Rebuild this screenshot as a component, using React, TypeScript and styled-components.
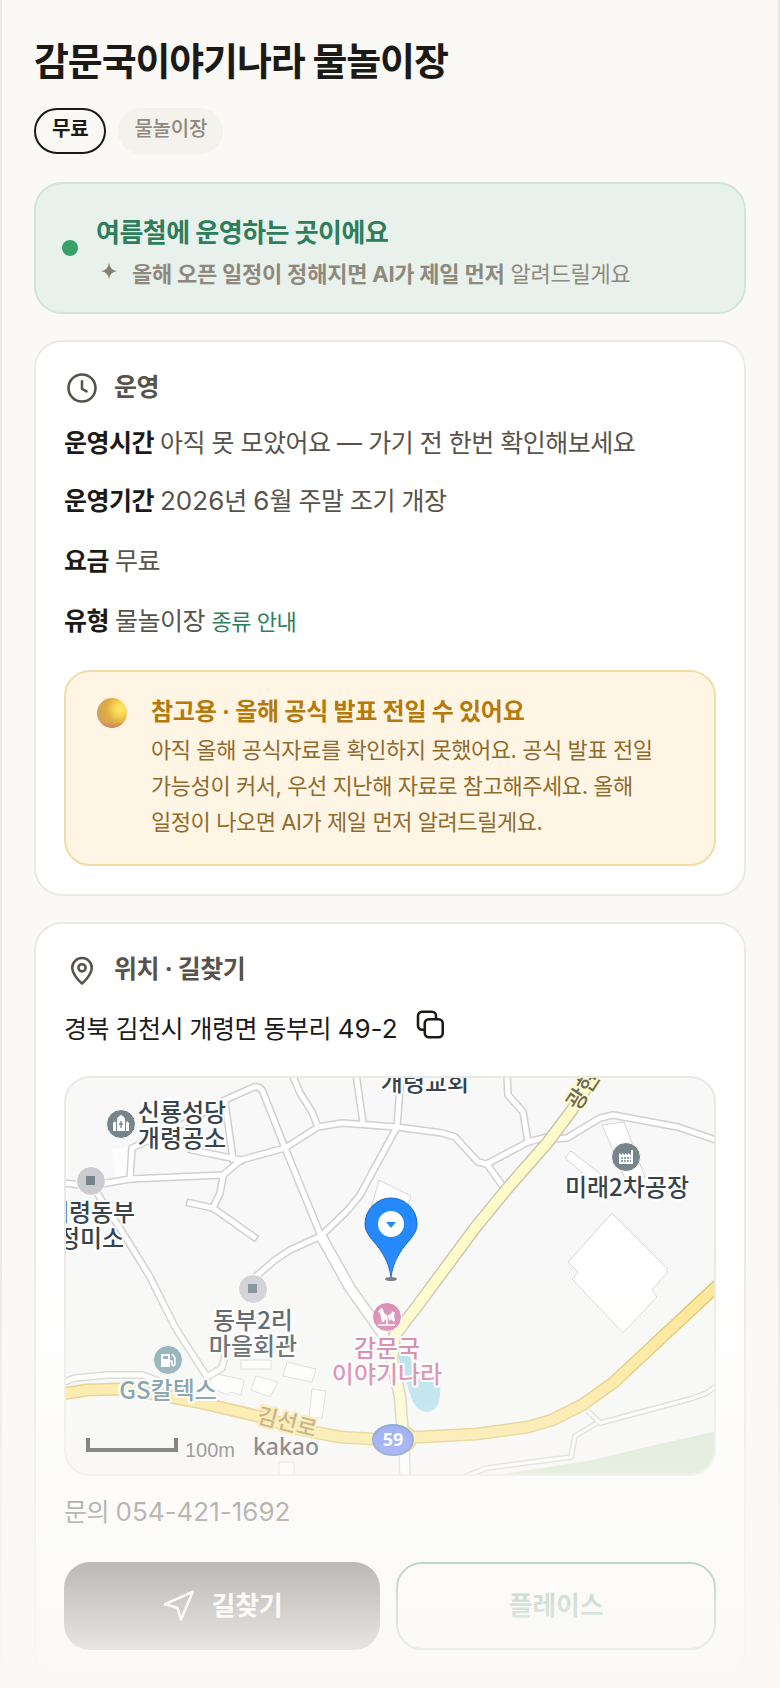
import React from "react";
import styled, { createGlobalStyle } from "styled-components";

const ink = "#1c1a17";
const body = "#57534a";
const line = "#ebe9e2";
const paper = "#faf9f6";
const green = "#2e7d5b";

const GlobalStyle = createGlobalStyle`
  *, *::before, *::after { box-sizing: border-box; }
  body {
    margin: 0;
    background: ${paper};
    color: ${ink};
    font-family: Inter, "Noto Sans CJK KR", sans-serif;
    font-size: 25px;
    letter-spacing: -0.02em;
    word-break: keep-all;
  }
  h1, h2, p, dl, dd { margin: 0; }
  button { font: inherit; letter-spacing: inherit; color: inherit; cursor: pointer; }
`;

const Page = styled.main`
  position: relative;
  padding: 38px 32px 8px;
  border: solid ${line};
  border-width: 0 2px;
`;

const Title = styled.h1`
  font-size: 38px;
  line-height: 46px;
  font-weight: 700;
  letter-spacing: -0.03em;
`;

const Tags = styled.div`
  display: flex;
  gap: 12px;
  margin: 24px 0 28px;
`;

const Tag = styled.span<{ $outlined?: boolean }>`
  padding: ${(p) => (p.$outlined ? "0 16px 4px" : "2px 16px 6px")};
  border: ${(p) => (p.$outlined ? `2px solid ${ink}` : "none")};
  border-radius: 23px;
  background: ${(p) => (p.$outlined ? "transparent" : "#f3f2ed")};
  color: ${(p) => (p.$outlined ? ink : "#8f897d")};
  font-size: 20px;
  line-height: 38px;
  font-weight: ${(p) => (p.$outlined ? 700 : 500)};
  letter-spacing: -0.01em;
`;

const Banner = styled.section`
  display: flex;
  align-items: center;
  gap: 18px;
  padding: 20px 26px;
  border: 2px solid #cfe5d9;
  border-radius: 28px;
  background: #e8f1eb;
`;

const StatusDot = styled.span`
  flex: none;
  width: 16px;
  height: 16px;
  border-radius: 50%;
  background: #38a169;
`;

const BannerText = styled.div`
  padding-top: 8px;
`;

const BannerTitle = styled.h2`
  font-size: 26px;
  line-height: 42px;
  font-weight: 700;
  color: ${green};
`;

const BannerNote = styled.p`
  display: flex;
  align-items: center;
  gap: 10px;
  margin-top: 2px;
  font-size: 22px;
  line-height: 36px;
  letter-spacing: -0.01em;
  color: #8f897d;
`;

const Card = styled.section`
  margin-top: 26px;
  padding: 28px;
  border: 2px solid ${line};
  border-radius: 28px;
  background: #fff;
`;

const CardTitle = styled.h2`
  display: flex;
  align-items: flex-start;
  gap: 14px;
  font-size: 25px;
  line-height: 34px;
  font-weight: 700;
  color: ${body};
`;

const Facts = styled.dl`
  display: flex;
  flex-direction: column;
  gap: 16px;
  margin-top: 16px;
`;

const Fact = styled.div<{ $roomy?: boolean }>`
  display: flex;
  flex-wrap: wrap;
  gap: 6px;
  padding-top: ${(p) => (p.$roomy ? 2 : 0)}px;
  line-height: 42px;
  color: ${body};

  dt {
    font-weight: 700;
    color: ${ink};
  }
`;

const Figures = styled.span`
  font-size: 26px;
  line-height: 1;
  letter-spacing: 0;
`;

const HelpLink = styled.a`
  font-size: 22px;
  line-height: 1;
  color: ${green};
  text-decoration: none;
`;

const Notice = styled.aside`
  display: flex;
  align-items: flex-start;
  gap: 21px;
  margin-top: 28px;
  padding: 22px 28px 24px;
  border: 2px solid #f0dca6;
  border-radius: 26px;
  background: #fff5e5;
`;

const NoticeIcon = styled.svg`
  flex: none;
  width: 36px;
  height: 38px;
`;

const NoticeTitle = styled.p`
  font-size: 24px;
  line-height: 36px;
  font-weight: 700;
  letter-spacing: -0.01em;
  color: #b57a0b;
`;

const NoticeBody = styled.p`
  margin-top: 2px;
  font-size: 22px;
  line-height: 36px;
  letter-spacing: -0.02em;
  color: #8f6b2e;
`;

const Address = styled.div`
  display: flex;
  align-items: flex-start;
  gap: 14px;
  margin: 20px 0 26px;
  line-height: 42px;
`;

const CopyButton = styled.button`
  display: flex;
  padding: 0;
  border: 0;
  background: none;
`;

const MapFrame = styled.figure`
  height: 400px;
  margin: 0;
  overflow: hidden;
  border: 2px solid ${line};
  border-radius: 26px;
  background: #f8f8f8;

  svg {
    display: block;
    width: 100%;
    height: 100%;
  }
`;

const Phone = styled.p`
  margin-top: 16px;
  line-height: 40px;
  color: ${body};
`;

const Actions = styled.div`
  display: flex;
  gap: 16px;
  margin-top: 30px;
`;

const Action = styled.button<{ $solid?: boolean }>`
  flex: 1;
  display: flex;
  align-items: center;
  justify-content: center;
  gap: 14px;
  min-height: 88px;
  padding: 0;
  border: ${(p) => (p.$solid ? "none" : `2px solid ${green}`)};
  border-radius: 26px;
  background: ${(p) => (p.$solid ? ink : "#fff")};
  color: ${(p) => (p.$solid ? "#fff" : green)};
  font-size: 26px;
  line-height: 36px;
  font-weight: 700;
  letter-spacing: -0.01em;
`;

const Fade = styled.div`
  position: absolute;
  inset: auto -2px 0;
  height: 440px;
  background: linear-gradient(to bottom, rgba(250, 249, 246, 0), ${paper});
  pointer-events: none;
`;

const Icon = styled.svg.attrs({
  viewBox: "0 0 24 24",
  fill: "none",
  stroke: "currentColor",
  strokeWidth: 1.7,
  strokeLinecap: "round",
  strokeLinejoin: "round",
  "aria-hidden": true,
})`
  flex: none;
  width: 36px;
  height: 36px;
`;

const NoteIcon = styled.svg`
  flex: none;
  width: 26px;
  height: 26px;
  margin-bottom: 6px;
`;

const MapLabel = styled.text<{ $tone?: string }>`
  font-family: "Noto Sans CJK KR", sans-serif;
  font-size: 24px;
  font-weight: 500;
  letter-spacing: 0;
  text-anchor: middle;
  fill: ${(p) => p.$tone ?? "#37444b"};
  stroke: #fff;
  stroke-width: 4px;
  stroke-linejoin: round;
  paint-order: stroke;
`;

const RoadLabel = styled(MapLabel)<{ $halo: string }>`
  font-size: 22px;
  stroke: ${(p) => p.$halo};
`;

const MapMark = styled.text<{ $family: string; $size: number; $weight?: number }>`
  font-family: ${(p) => p.$family}, sans-serif;
  font-size: ${(p) => p.$size}px;
  font-weight: ${(p) => p.$weight ?? 400};
  letter-spacing: 0;
`;

const smallRoads = [
  "M-2 105 L24 108 L64 101 L157 97 L175 82 L219 70 L252 49 L276 45 L331 49 L376 55 L389 59 L412 84 L421 86 L462 64 L481 59",
  "M490 61 L501 60 L534 40 L547 37 L612 49 L650 62",
  "M421 86 L438 110",
  "M441 -4 L442 17 L457 34 L462 64",
  "M226 -4 L234 15 L246 34 L252 49",
  "M290 -4 L297 45",
  "M335 -4 L331 49 L294 117 L282 132 L255 158 L224 172 L209 182 L187 201",
  "M64 101 L66 70 L121 44 L159 22 L188 9 Q194 8 197 14 L219 70 L255 158",
  "M159 24 L167 81",
  "M126 72 L175 82",
  "M157 99 L154 115 L147 130 L124 125",
  "M147 130 L188 159",
  "M31 115 L57 155 L84 199 L94 219 L109 249 L141 299 L156 290 L159 278",
  "M-2 304 L9 300 L41 297 L77 297 L107 309",
];

const lanes = [
  "M521 332 L534 345 L624 321 L641 315 L650 308",
  "M531 345 L509 358 L505 379 L421 390 L400 398",
];

const buildings = [
  "546,135 601,190 601,195 586,212 591,219 557,255 506,201 512,194 502,184",
  "536,47 558,44 579,99 561,105",
  "505,73 499,80 527,104 537,98",
  "313,102 345,118 338,140 305,130",
  "175,282 205,282 205,291 175,291",
  "221,284 250,291 246,304 217,298",
  "190,298 212,304 204,319 185,312",
  "246,311 260,313 256,340 243,340",
  "147,295 178,302 175,317 164,314 162,317 142,309",
  "213,384 228,384 228,397 213,397",
];

const highway =
  "M-4 316 L21 312 L54 311 L94 317 L131 324 L191 338 L237 352 L274 359 L307 361 L354 359 L411 356 L462 349 L486 342 L516 327 L547 305 L652 207";
const avenue = "M529 -4 L506 32 L482 64 L440 112 L409 150 L352 227 L329 257 L326 282 L334 319 L337 358";

function AreaMap() {
  return (
    <svg viewBox="0 0 648 396" preserveAspectRatio="xMidYMid slice" role="img" aria-label="감문국이야기나라 지도">
      <polygon points="46,71 66,69 62,99 49,99" fill="#fdfdfd" />
      <polygon points="437,396 527,382 597,365 648,354 648,396" fill="#d3e4cb" />
      <path d="M331 274 L344 279 L352 300 L374 306 Q376 334 361 334 Q351 334 345 319 Z" fill="#a9dcee" />
      <g fill="#fff" stroke="#d4d4d4">
        {buildings.map((points) => (
          <polygon key={points} points={points} />
        ))}
      </g>
      <g fill="none" strokeLinejoin="round">
        {smallRoads.map((d) => (
          <path key={d} d={d} stroke="#d0d0d0" strokeWidth="8" strokeLinecap="square" />
        ))}
        {lanes.map((d) => (
          <path key={d} d={d} stroke="#d2d2d2" strokeWidth="6" />
        ))}
        <path d="M255 158 L284 210 L321 262" stroke="#d0d0d0" strokeWidth="12" />
        <path d="M338 370 L339 398" stroke="#d2d2d2" strokeWidth="12" />
        {smallRoads.map((d) => (
          <path key={d} d={d} stroke="#fff" strokeWidth="5" strokeLinecap="square" />
        ))}
        {lanes.map((d) => (
          <path key={d} d={d} stroke="#fff" strokeWidth="3" />
        ))}
        <path d="M255 158 L284 210 L321 262" stroke="#fff" strokeWidth="9" />
        <path d="M338 370 L339 398" stroke="#fff" strokeWidth="9" />
        <path d={avenue} stroke="#cbc6b4" strokeWidth="13" />
        <path d={highway} stroke="#dcc466" strokeWidth="13" />
        <circle cx="337" cy="361" r="13" fill="#fde68f" stroke="#dcc466" strokeWidth="2" />
        <path d={avenue} stroke="#fffbc8" strokeWidth="10" />
        <path d={highway} stroke="#fde68f" strokeWidth="10" />
      </g>

      <ellipse cx="327" cy="362" rx="20" ry="15" fill="#6581f4" stroke="#4c78b8" strokeWidth="2" />
      <MapMark x="327" y="368" textAnchor="middle" $family="Noto Sans" $size={18} $weight={700} fill="#fff">
        59
      </MapMark>

      <MapLabel x="359" y="13">개령교회</MapLabel>
      <MapLabel x="116" y="43">신룡성당</MapLabel>
      <MapLabel x="116" y="69">개령공소</MapLabel>
      <MapLabel x="25" y="143">개령동부</MapLabel>
      <MapLabel x="25" y="169">정미소</MapLabel>
      <MapLabel x="561" y="118">미래2차공장</MapLabel>
      <MapLabel x="187" y="251" $tone="#465157">동부2리</MapLabel>
      <MapLabel x="187" y="277" $tone="#465157">마을회관</MapLabel>
      <MapLabel x="102" y="321" $tone="#567f8f">GS칼텍스</MapLabel>
      <MapLabel x="321" y="279" $tone="#d0729f">감문국</MapLabel>
      <MapLabel x="321" y="305" $tone="#d0729f">이야기나라</MapLabel>
      <g transform="rotate(14 221 345)">
        <RoadLabel x="221" y="352" $tone="#a88a4c" $halo="#fde68f">김선로</RoadLabel>
      </g>
      <g transform="rotate(-57 518 12)">
        <RoadLabel x="517" y="19" $tone="#6b6a62" $halo="#fffbc8">광현</RoadLabel>
      </g>

      <g stroke="#fff" strokeWidth="1">
        <circle cx="55" cy="46" r="14.5" fill="#77858b" />
        <circle cx="25" cy="103" r="14.5" fill="#cbcbd0" />
        <circle cx="560" cy="79" r="14.5" fill="#77858b" />
        <circle cx="187" cy="211" r="14.5" fill="#d0d0d5" />
        <circle cx="102" cy="282" r="14.5" fill="#7ba0ae" />
        <circle cx="321" cy="239" r="14.5" fill="#d583ae" />
      </g>
      <path d="M20 98h9v9h-9z" fill="#77858b" />
      <path d="M182 206h9v9h-9z" fill="#808d92" />
      <path d="M47 53v-8l2-2 1 2v8zM51 53V42q0-3 4-5 4 2 4 5v11zM60 53v-8l1-2 2 2v8z" fill="#fff" />
      <path d="M55 43v7M53 46h4" stroke="#77858b" strokeWidth="1.4" />
      <path d="M553 86V75l3 2v-2l3 2v-2l3 2v-2l3 2v-5h2v14z" fill="#fff" />
      <path d="M555 80h10M555 83h10" stroke="#77858b" strokeWidth="1.4" strokeDasharray="2 1" />
      <path d="M95 289v-13h9v13z" fill="#fff" />
      <path d="M97 278h5v3h-5z" fill="#7ba0ae" />
      <path d="M104 283h2v4q2 2 3-1v-6l-3-4" fill="none" stroke="#fff" strokeWidth="1.6" />
      <path d="M312 247h17M321 247v-9" stroke="#fff" strokeWidth="1.4" />
      <path
        d="M312 234l3-4 2 1 1 4 3 2v6l-2-2-1 3h-2l-1-4-1-5zM322 237l3-1 1-3 3 2-1 3 1 5-2 1-1-3-3 2z"
        fill="#fff"
      />

      <ellipse cx="325" cy="201" rx="6" ry="2" fill="#77777a" />
      <path
        d="M325 199 C323 185 317 174 308 164 C303 158 299 153 299 146 A26 26 0 0 1 351 146 C351 153 347 158 342 164 C333 174 327 185 325 199 Z"
        fill="#2489fb"
        stroke="#1a66c9"
      />
      <circle cx="325" cy="146" r="13" fill="#fff" />
      <path d="M320 144h10l-5 6z" fill="#2489fb" />

      <path d="M22 360 V372 H110 V360" fill="none" stroke="#262626" strokeWidth="4" />
      <MapMark x="119" y="379" $family="Liberation Sans" $size={20} fill="#505050">
        100m
      </MapMark>
      <MapMark x="187" y="377" $family="Noto Sans" $size={23} $weight={500} fill="#333">
        kakao
      </MapMark>
    </svg>
  );
}

export default function App() {
  return (
    <>
      <GlobalStyle />
      <Page>
        <Title>감문국이야기나라 물놀이장</Title>
        <Tags>
          <Tag $outlined>무료</Tag>
          <Tag>물놀이장</Tag>
        </Tags>

        <Banner>
          <StatusDot />
          <BannerText>
            <BannerTitle>여름철에 운영하는 곳이에요</BannerTitle>
            <BannerNote>
              <NoteIcon viewBox="0 0 26 26" aria-hidden="true">
                <path d="M13 5 Q14 12 21 13 Q14 14 13 21 Q12 14 5 13 Q12 12 13 5Z" fill="#857f73" />
              </NoteIcon>
              <span>
                <b>올해 오픈 일정이 정해지면 AI가 제일 먼저</b> 알려드릴게요
              </span>
            </BannerNote>
          </BannerText>
        </Banner>

        <Card>
          <CardTitle>
            <Icon>
              <circle cx="12" cy="12" r="9" />
              <path d="M12 7.5v5l3 1.8" />
            </Icon>
            운영
          </CardTitle>
          <Facts>
            <Fact>
              <dt>운영시간</dt>
              <dd>아직 못 모았어요 — 가기 전 한번 확인해보세요</dd>
            </Fact>
            <Fact>
              <dt>운영기간</dt>
              <dd>
                <Figures>2026</Figures>년 <Figures>6</Figures>월 주말 조기 개장
              </dd>
            </Fact>
            <Fact $roomy>
              <dt>요금</dt>
              <dd>무료</dd>
            </Fact>
            <Fact $roomy>
              <dt>유형</dt>
              <dd>
                물놀이장 <HelpLink href="#types">종류 안내</HelpLink>
              </dd>
            </Fact>
          </Facts>
          <Notice>
            <NoticeIcon viewBox="0 0 36 38" aria-hidden="true">
              <defs>
                <radialGradient id="moon" cx="0.78" cy="0.36" r="0.8">
                  <stop offset="0" stopColor="#ffe566" />
                  <stop offset="0.2" stopColor="#fddc5a" />
                  <stop offset="0.6" stopColor="#dfac42" />
                  <stop offset="1" stopColor="#d0a05c" />
                </radialGradient>
                <linearGradient id="moonRim" x1="0" y1="0" x2="0" y2="1">
                  <stop offset="0.8" stopColor="#d68068" stopOpacity="0" />
                  <stop offset="1" stopColor="#d68068" />
                </linearGradient>
              </defs>
              <circle cx="18" cy="19" r="15" fill="url(#moon)" />
              <circle cx="18" cy="19" r="15" fill="url(#moonRim)" />
            </NoticeIcon>
            <div>
              <NoticeTitle>참고용 · 올해 공식 발표 전일 수 있어요</NoticeTitle>
              <NoticeBody>
                아직 올해 공식자료를 확인하지 못했어요. 공식 발표 전일 가능성이 커서, 우선 지난해 자료로 참고해주세요. 올해
                일정이 나오면 AI가 제일 먼저 알려드릴게요.
              </NoticeBody>
            </div>
          </Notice>
        </Card>

        <Card>
          <CardTitle>
            <Icon>
              <path d="M12 21S5.5 15.5 5.5 10.5a6.5 6.5 0 0 1 13 0C18.5 15.5 12 21 12 21z" />
              <circle cx="12" cy="10.5" r="2.4" />
            </Icon>
            위치 · 길찾기
          </CardTitle>
          <Address>
            <span>
              경북 김천시 개령면 동부리 <Figures>49-2</Figures>
            </span>
            <CopyButton type="button" aria-label="주소 복사">
              <Icon>
                <rect x="8.5" y="7.5" width="12" height="12" rx="2.8" />
                <path d="M8 14.5H6.7A2.7 2.7 0 0 1 4 11.8V5.2a2.7 2.7 0 0 1 2.7-2.7h6.6a2.7 2.7 0 0 1 2.7 2.7v2" />
              </Icon>
            </CopyButton>
          </Address>
          <MapFrame>
            <AreaMap />
          </MapFrame>
          <Phone>
            문의 <Figures>054-421-1692</Figures>
          </Phone>
          <Actions>
            <Action type="button" $solid>
              <Icon>
                <path d="M20.5 2.5L2 10.8l8.3 2.4L12.7 21z" />
              </Icon>
              길찾기
            </Action>
            <Action type="button">플레이스</Action>
          </Actions>
        </Card>
        <Fade />
      </Page>
    </>
  );
}
